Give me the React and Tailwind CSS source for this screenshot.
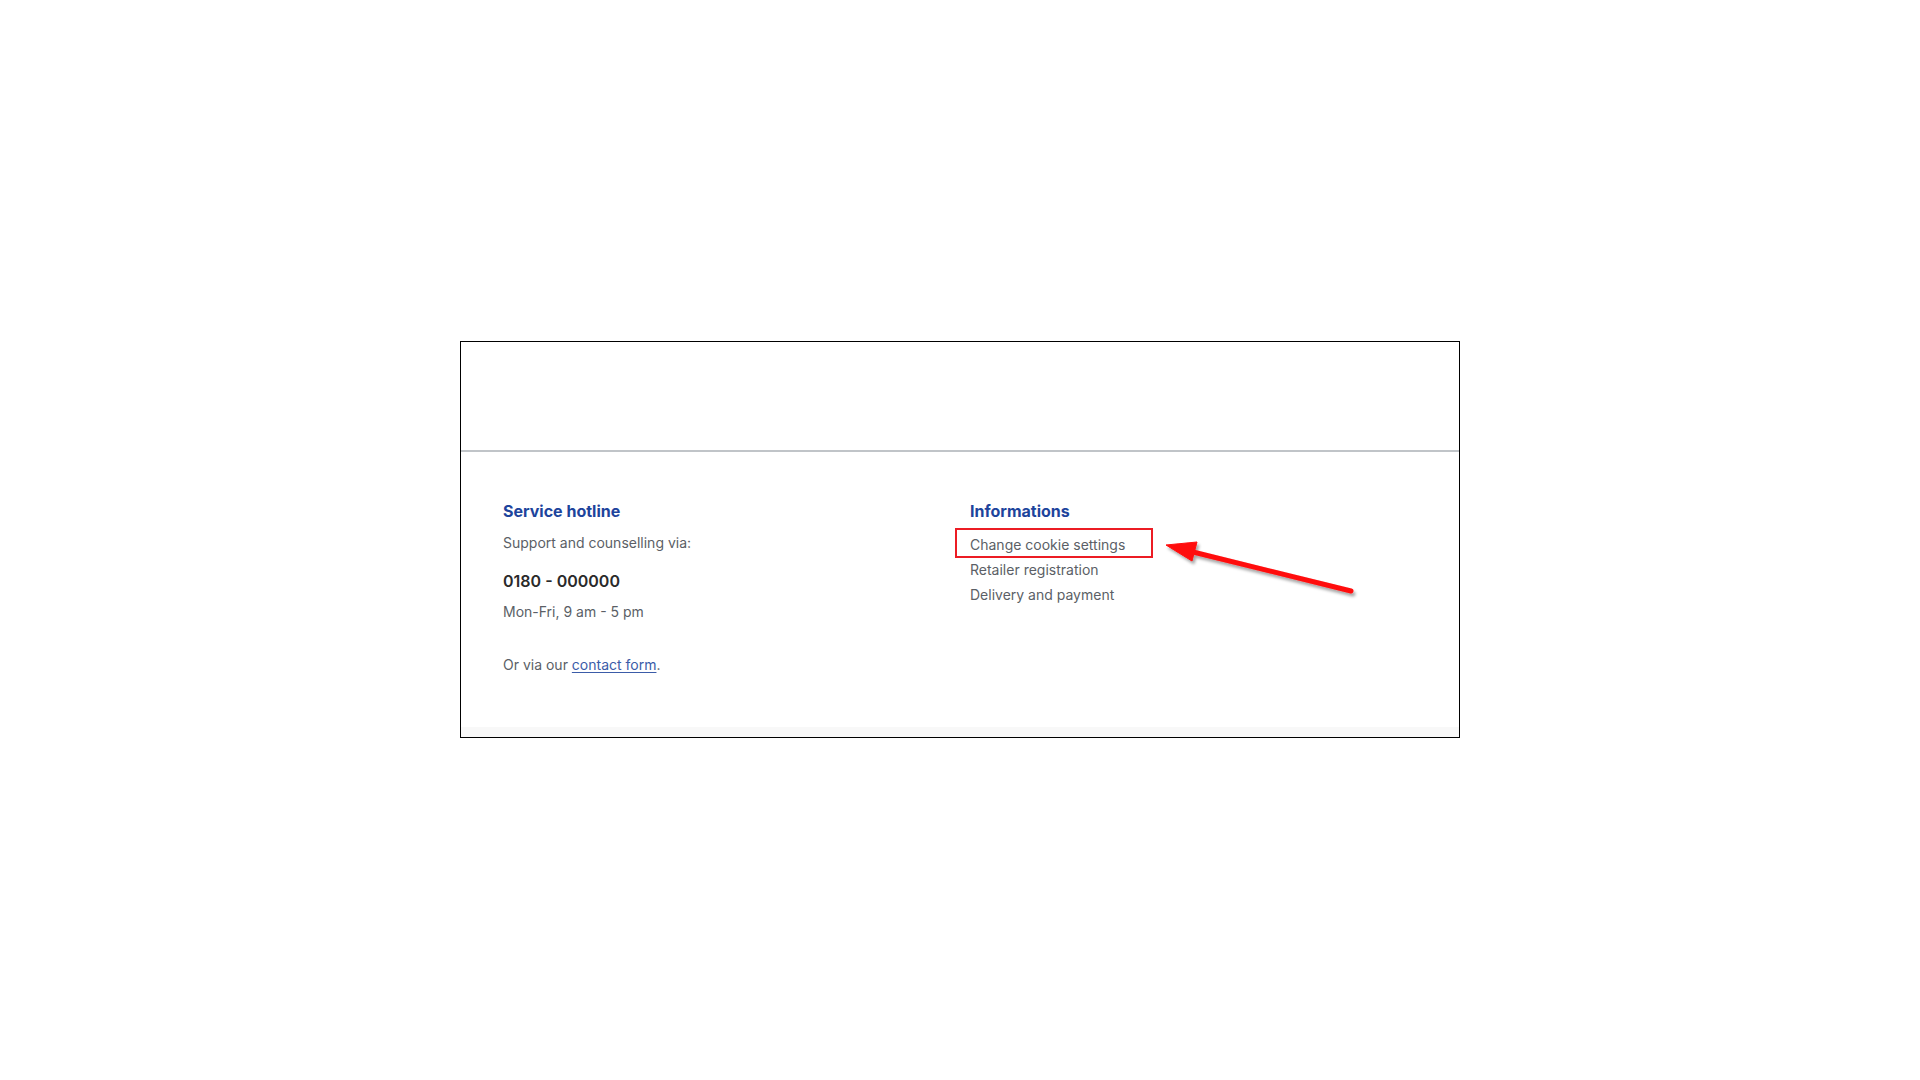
import React from 'react';

const infoLinks = ['Change cookie settings', 'Retailer registration', 'Delivery and payment'];

// annotation arrow pointing at the cookie link (coords relative to the footer frame)
const Arrow = () => (
  <svg
    className="pointer-events-none absolute left-0 top-0"
    width="1000"
    height="398"
    viewBox="0 0 1000 398"
  >
    <defs>
      <filter id="shadow" x="-20%" y="-50%" width="140%" height="200%">
        <feDropShadow dx="2" dy="3" stdDeviation="1.5" floodColor="#000" floodOpacity="0.35" />
      </filter>
    </defs>
    <g filter="url(#shadow)" fill="#ff0a0a" stroke="#ff0a0a">
      <line x1="890" y1="249" x2="728" y2="209" strokeWidth="5" strokeLinecap="round" />
      <polygon points="705,203 736,200 731,219" strokeWidth="1" strokeLinejoin="round" />
    </g>
  </svg>
);

export default function App() {
  return (
    <div className="min-h-screen bg-white pt-[341px] font-['Inter',sans-serif]">
      <div className="relative mx-auto w-[1000px] border border-black bg-white">
        <div className="h-[108px]" />
        <div className="h-[2px] bg-[#c0c4c8]" />

        <div className="flex pl-[42px] pt-[47px] pb-[52px]">
          <div className="w-[467px]">
            <h3 className="text-[16px] leading-[24px] font-bold text-[#1d449c]">Service hotline</h3>
            <p className="mt-[10px] text-[14px] leading-[20px] text-[#5b5f66]">Support and counselling via:</p>
            <p className="mt-[16px] text-[16px] leading-[24px] font-semibold text-[#2a2a2a]">0180 - 000000</p>
            <p className="mt-[9px] text-[14px] leading-[20px] text-[#5b5f66]">Mon-Fri, 9 am - 5 pm</p>
            <p className="mt-[33px] text-[14px] leading-[20px] text-[#5b5f66]">
              Or via our{' '}
              <a href="#" className="text-[#3b5ca8] underline underline-offset-2">
                contact form
              </a>
              .
            </p>
          </div>

          <div>
            <h3 className="text-[16px] leading-[24px] font-bold text-[#1d449c]">Informations</h3>
            <ul className="mt-[9px]">
              {infoLinks.map((label, i) => (
                <li key={label} className="relative text-[14px] leading-[25px] text-[#5b5f66]">
                  {i === 0 && (
                    <span className="absolute left-[-15px] top-[-4px] h-[30px] w-[198px] border-[2.5px] border-[#ec1c24]" />
                  )}
                  <a href="#">{label}</a>
                </li>
              ))}
            </ul>
          </div>
        </div>

        <div className="h-[10px] bg-[#f8f8f8]" />
        <Arrow />
      </div>
    </div>
  );
}
